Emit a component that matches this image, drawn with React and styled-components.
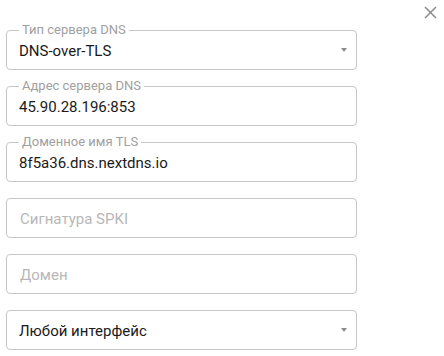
import React from "react";
import styled, { createGlobalStyle } from "styled-components";

const Global = createGlobalStyle`
  html, body { margin: 0; padding: 0; background: #fff; }
  body { font-family: Roboto, "Noto Sans", Arial, sans-serif; }
  * { box-sizing: border-box; }
`;

const Page = styled.div`
  display: flex;
  align-items: flex-start;
  width: 444px;
  height: 356px;
  padding: 6px 7px 0 6px;
`;

const Form = styled.div`
  display: flex;
  flex-direction: column;
  gap: 16px;
  width: 351px;
  margin-top: 24px;
`;

const Field = styled.div`
  position: relative;
  display: flex;
  align-items: center;
  height: 40px;
  padding: 0 12px;
  border: 1px solid #c6c6c6;
  border-radius: 4px;
`;

const Label = styled.span`
  position: absolute;
  left: 12px;
  top: -9px;
  padding: 0 3px;
  background: #fff;
  font-size: 13px;
  line-height: 15px;
  color: #a0a0a0;
`;

const Value = styled.span`
  flex: 1;
  font-size: 15px;
  color: ${(p) => (p.$placeholder ? "#b7b7b7" : "#1a1a1a")};
  padding-left: ${(p) => (p.$placeholder ? "1px" : "0")};
  padding-top: 1px;
`;

const Arrow = styled.span`
  width: 0;
  height: 0;
  margin-right: -3px;
  border-left: 3.5px solid transparent;
  border-right: 3.5px solid transparent;
  border-top: 4px solid #8c8c8c;
`;

const Close = styled.button`
  margin-left: auto;
  width: 13px;
  height: 13px;
  padding: 0;
  border: 0;
  background: none;
  display: flex;
  align-items: center;
  justify-content: center;
  cursor: pointer;
`;

function TextField({ label, value, placeholder, select }) {
  return (
    <Field>
      {label && <Label>{label}</Label>}
      {value ? <Value>{value}</Value> : <Value $placeholder>{placeholder}</Value>}
      {select && <Arrow />}
    </Field>
  );
}

export default function App() {
  return (
    <>
      <Global />
      <Page>
        <Form>
          <TextField label="Тип сервера DNS" value="DNS-over-TLS" select />
          <TextField label="Адрес сервера DNS" value="45.90.28.196:853" />
          <TextField label="Доменное имя TLS" value="8f5a36.dns.nextdns.io" />
          <TextField placeholder="Сигнатура SPKI" />
          <TextField placeholder="Домен" />
          <TextField value="Любой интерфейс" select />
        </Form>
        <Close aria-label="Закрыть">
          <svg width="13" height="13" viewBox="0 0 13 13">
            <path d="M1 1 L12 12 M12 1 L1 12" stroke="#8a8a8a" strokeWidth="1.5" fill="none" />
          </svg>
        </Close>
      </Page>
    </>
  );
}
